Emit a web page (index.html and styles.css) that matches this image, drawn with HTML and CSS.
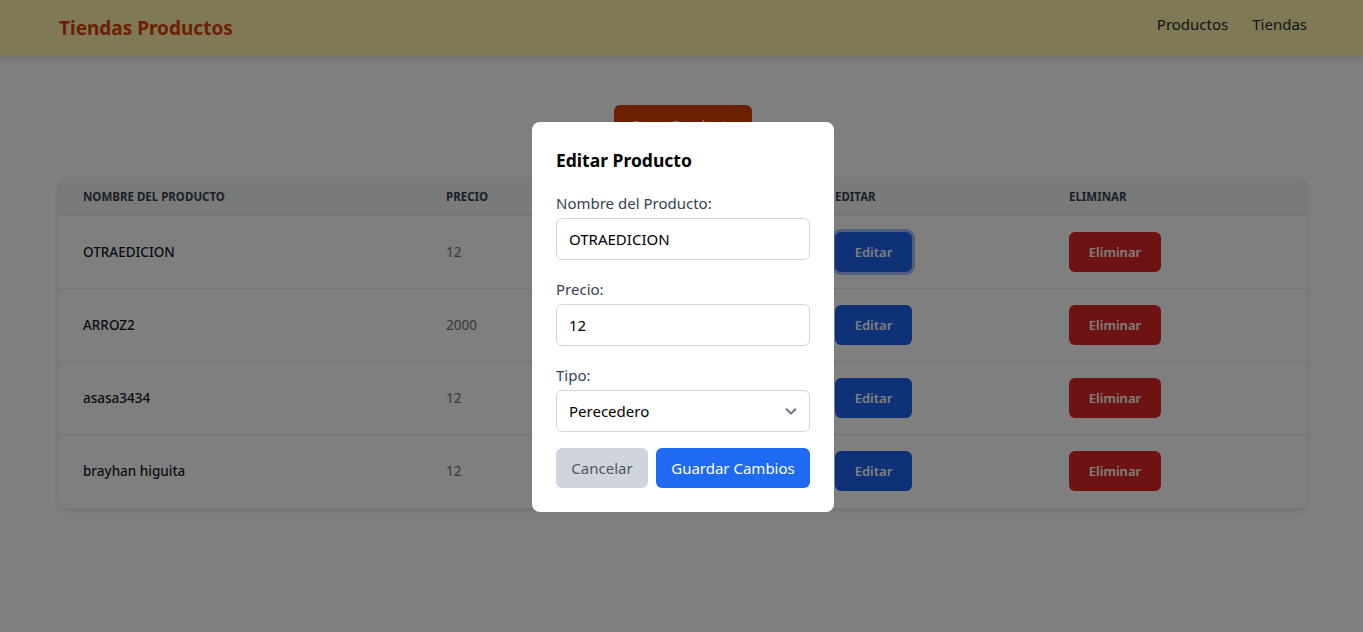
FILE: index.html
```html
<!DOCTYPE html>
<html lang="es">
<head>
<meta charset="utf-8">
<title>Tiendas Productos</title>
<link rel="stylesheet" href="styles.css">
</head>
<body>
<header class="navbar">
  <div class="brand">Tiendas Productos</div>
  <nav class="nav-links">
    <a href="#">Productos</a>
    <a href="#">Tiendas</a>
  </nav>
</header>

<main class="content">
  <div class="actions">
    <button class="btn-create">Crear Producto</button>
  </div>

  <div class="table-card">
    <table class="products">
      <colgroup>
        <col class="c-name"><col class="c-price"><col class="c-type"><col class="c-edit"><col class="c-del">
      </colgroup>
      <thead>
        <tr>
          <th>Nombre del Producto</th>
          <th>Precio</th>
          <th>Tipo</th>
          <th>Editar</th>
          <th>Eliminar</th>
        </tr>
      </thead>
      <tbody>
        <tr>
          <td class="name">OTRAEDICION</td>
          <td class="price">12</td>
          <td class="price">Perecedero</td>
          <td><button class="btn-edit focused">Editar</button></td>
          <td><button class="btn-del">Eliminar</button></td>
        </tr>
        <tr>
          <td class="name">ARROZ2</td>
          <td class="price">2000</td>
          <td class="price">No perecedero</td>
          <td><button class="btn-edit">Editar</button></td>
          <td><button class="btn-del">Eliminar</button></td>
        </tr>
        <tr>
          <td class="name">asasa3434</td>
          <td class="price">12</td>
          <td class="price">Perecedero</td>
          <td><button class="btn-edit">Editar</button></td>
          <td><button class="btn-del">Eliminar</button></td>
        </tr>
        <tr>
          <td class="name">brayhan higuita</td>
          <td class="price">12</td>
          <td class="price">Perecedero</td>
          <td><button class="btn-edit">Editar</button></td>
          <td><button class="btn-del">Eliminar</button></td>
        </tr>
      </tbody>
    </table>
  </div>
</main>

<div class="overlay">
  <div class="modal">
    <h2 class="modal-title">Editar Producto</h2>
    <div class="field">
      <label>Nombre del Producto:</label>
      <input class="input" type="text" value="OTRAEDICION">
    </div>
    <div class="field">
      <label>Precio:</label>
      <input class="input" type="text" value="12">
    </div>
    <div class="field last">
      <label>Tipo:</label>
      <div class="select-wrap">
        <select class="input select">
          <option>Perecedero</option>
          <option>No perecedero</option>
        </select>
        <svg class="chevron" width="14" height="14" viewBox="0 0 16 16"><path d="M3 6l5 5 5-5" fill="none" stroke="#6b7280" stroke-width="2.2" stroke-linecap="round" stroke-linejoin="round"/></svg>
      </div>
    </div>
    <div class="modal-actions">
      <button class="btn-cancel">Cancelar</button>
      <button class="btn-save">Guardar Cambios</button>
    </div>
  </div>
</div>
</body>
</html>
```
FILE: styles.css
```css
* { box-sizing: border-box; }
html, body { margin: 0; padding: 0; }
body {
  font-family: "Noto Sans", "Open Sans", "Liberation Sans", sans-serif;
  background: #ffffff;
  color: #111827;
  height: 632px;
  overflow: hidden;
}
.navbar {
  height: 56px;
  background: #fef3aa;
  box-shadow: 0 2px 6px rgba(0,0,0,0.15);
  display: flex;
  align-items: center;
  justify-content: space-between;
  padding: 0 56px 0 59px;
}
.brand {
  color: #d9400a;
  font-size: 19px;
  font-weight: 700;
  margin-top: -1px;
}
.nav-links { display: flex; gap: 24px; margin-top: -8px; }
.nav-links a {
  color: #1f2937;
  text-decoration: none;
  font-size: 15px;
}
.content { padding: 49px 56px 0 59px; }
.actions { display: flex; justify-content: center; }
.btn-create {
  background: #d64000;
  color: #fff;
  border: 0;
  border-radius: 6px;
  height: 40px;
  width: 138px;
  font-family: inherit;
  font-size: 15px;
}
.table-card {
  margin-top: 33px;
  background: #fff;
  border-radius: 8px;
  box-shadow: 0 2px 6px rgba(0,0,0,0.12);
  overflow: hidden;
}
.products { width: 100%; border-collapse: collapse; table-layout: fixed; }
.c-name { width: 363px; }
.c-price { width: 194px; }
.c-type { width: 195px; }
.c-edit { width: 234px; }
.c-del { width: 262px; }
.products th {
  background: #f3f4f6;
  text-align: left;
  text-transform: uppercase;
  font-size: 11.5px;
  font-weight: 700;
  color: #374151;
  padding: 10px 24px;
  line-height: 17px;
  height: 37px;
}
.products td {
  padding: 16px 24px;
  border-top: 1px solid #e5e7eb;
  font-size: 13.5px;
  height: 73px;
}
.products td.name { color: #111827; font-weight: 500; }
.products td.price { color: #6b7280; }
.btn-edit, .btn-del {
  height: 40px;
  border: 0;
  border-radius: 6px;
  color: #fff;
  font-family: inherit;
  font-size: 13px;
  font-weight: 600;
  display: block;
}
.btn-edit { background: #1d63ee; width: 77px; }
.btn-edit.focused { box-shadow: 0 0 0 3px rgba(147,180,253,0.85); }
.btn-del { background: #dc2626; width: 92px; }

.overlay {
  position: fixed;
  inset: 0;
  background: rgba(0,0,0,0.5);
  display: flex;
  align-items: center;
  justify-content: center;
}
.modal {
  width: 302px;
  background: #fff;
  border-radius: 8px;
  padding: 24px;
  margin-left: 3px;
  margin-top: 2px;
}
.modal-title {
  margin: 0 0 17px;
  font-size: 17.5px;
  font-weight: 700;
  line-height: 28px;
  color: #000;
}
.field { margin-bottom: 17px; }
.field.last { margin-bottom: 16px; }
.field label {
  display: block;
  font-size: 15px;
  line-height: 24px;
  color: #374151;
  margin-bottom: 3px;
}
.input {
  display: block;
  width: 100%;
  height: 42px;
  border: 1px solid #d1d5db;
  border-radius: 6px;
  padding: 0 12px;
  font-family: inherit;
  font-size: 15px;
  color: #000;
  background: #fff;
  outline: none;
}
.select-wrap { position: relative; }
.select { appearance: none; -webkit-appearance: none; }
.chevron { position: absolute; right: 12px; top: 14px; pointer-events: none; }
.modal-actions { display: flex; gap: 8px; }
.btn-cancel, .btn-save {
  height: 40px;
  border: 0;
  border-radius: 6px;
  font-family: inherit;
  font-size: 15px;
}
.btn-cancel { background: #d1d5db; color: #4b5563; width: 92px; }
.btn-save { background: #1f6af2; color: #fff; width: 154px; }
```
